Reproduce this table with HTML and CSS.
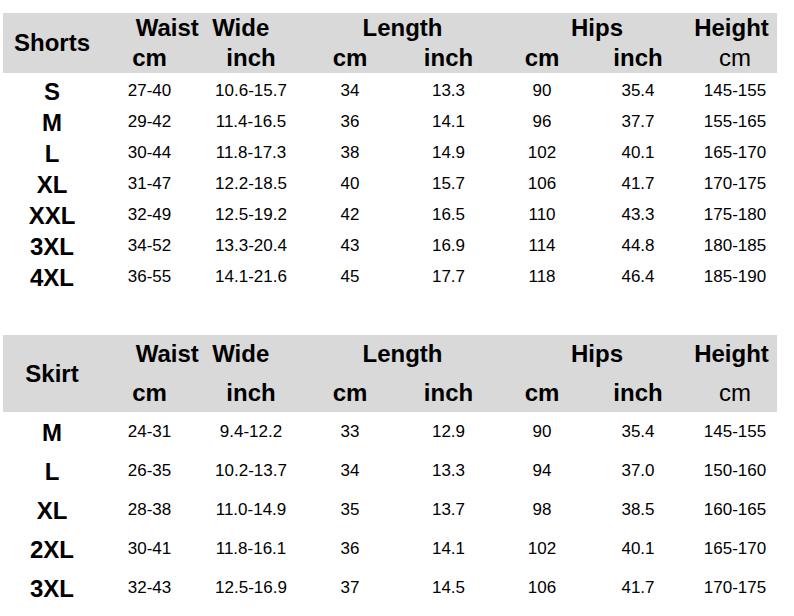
FILE: index.html
```html
<!DOCTYPE html>
<html>
<head>
<meta charset="utf-8">
<link rel="stylesheet" href="styles.css">
</head>
<body>
<div class="page">
  <section class="chart chart-shorts">
    <div class="head">
      <div class="title">Shorts</div>
      <div class="span2 pre">Waist  Wide</div>
      <div class="span2">Length</div>
      <div class="span2">Hips</div>
      <div class="height">Height</div>
      <div>cm</div>
      <div>inch</div>
      <div>cm</div>
      <div>inch</div>
      <div>cm</div>
      <div>inch</div>
      <div class="light">cm</div>
    </div>
    <div class="body">
      <div class="size">S</div><div>27-40</div><div>10.6-15.7</div><div>34</div><div>13.3</div><div>90</div><div>35.4</div><div>145-155</div>
      <div class="size">M</div><div>29-42</div><div>11.4-16.5</div><div>36</div><div>14.1</div><div>96</div><div>37.7</div><div>155-165</div>
      <div class="size">L</div><div>30-44</div><div>11.8-17.3</div><div>38</div><div>14.9</div><div>102</div><div>40.1</div><div>165-170</div>
      <div class="size">XL</div><div>31-47</div><div>12.2-18.5</div><div>40</div><div>15.7</div><div>106</div><div>41.7</div><div>170-175</div>
      <div class="size">XXL</div><div>32-49</div><div>12.5-19.2</div><div>42</div><div>16.5</div><div>110</div><div>43.3</div><div>175-180</div>
      <div class="size">3XL</div><div>34-52</div><div>13.3-20.4</div><div>43</div><div>16.9</div><div>114</div><div>44.8</div><div>180-185</div>
      <div class="size">4XL</div><div>36-55</div><div>14.1-21.6</div><div>45</div><div>17.7</div><div>118</div><div>46.4</div><div>185-190</div>
    </div>
  </section>

  <section class="chart chart-skirt">
    <div class="head">
      <div class="title">Skirt</div>
      <div class="span2 pre">Waist  Wide</div>
      <div class="span2">Length</div>
      <div class="span2">Hips</div>
      <div class="height">Height</div>
      <div>cm</div>
      <div>inch</div>
      <div>cm</div>
      <div>inch</div>
      <div>cm</div>
      <div>inch</div>
      <div class="light">cm</div>
    </div>
    <div class="body">
      <div class="size">M</div><div>24-31</div><div>9.4-12.2</div><div>33</div><div>12.9</div><div>90</div><div>35.4</div><div>145-155</div>
      <div class="size">L</div><div>26-35</div><div>10.2-13.7</div><div>34</div><div>13.3</div><div>94</div><div>37.0</div><div>150-160</div>
      <div class="size">XL</div><div>28-38</div><div>11.0-14.9</div><div>35</div><div>13.7</div><div>98</div><div>38.5</div><div>160-165</div>
      <div class="size">2XL</div><div>30-41</div><div>11.8-16.1</div><div>36</div><div>14.1</div><div>102</div><div>40.1</div><div>165-170</div>
      <div class="size">3XL</div><div>32-43</div><div>12.5-16.9</div><div>37</div><div>14.5</div><div>106</div><div>41.7</div><div>170-175</div>
    </div>
  </section>
</div>
</body>
</html>
```

FILE: styles.css
```css
html, body {
  margin: 0;
  padding: 0;
  background: #ffffff;
}

body {
  font-family: "Liberation Sans", Arial, sans-serif;
  color: #000;
}

.page {
  padding: 13px 0 0 3px;
  width: 774px;
}

.head,
.body {
  display: grid;
  grid-template-columns: 98px 97px 106px 92px 105px 82px 110px 84px;
  text-align: center;
}

.head {
  background: #d9d9d9;
  font-size: 24px;
  font-weight: bold;
  align-items: center;
}

.chart-shorts .head {
  grid-template-rows: 30px 30px;
}

.chart-skirt {
  margin-top: 43px;
}

.chart-skirt .head {
  grid-template-rows: 38.5px 38.5px;
}

.title {
  grid-row: span 2;
}

.span2 {
  grid-column: span 2;
}

.pre {
  white-space: pre;
}

.height {
  padding-right: 7px;
}

.light {
  font-weight: normal;
}

.body {
  font-size: 17px;
  align-items: center;
}

.chart-shorts .body {
  margin-top: 2px;
  grid-auto-rows: 31px;
}

.chart-skirt .body {
  grid-auto-rows: 39px;
}

.size {
  font-size: 24px;
  font-weight: bold;
  padding-top: 2px;
}
```
